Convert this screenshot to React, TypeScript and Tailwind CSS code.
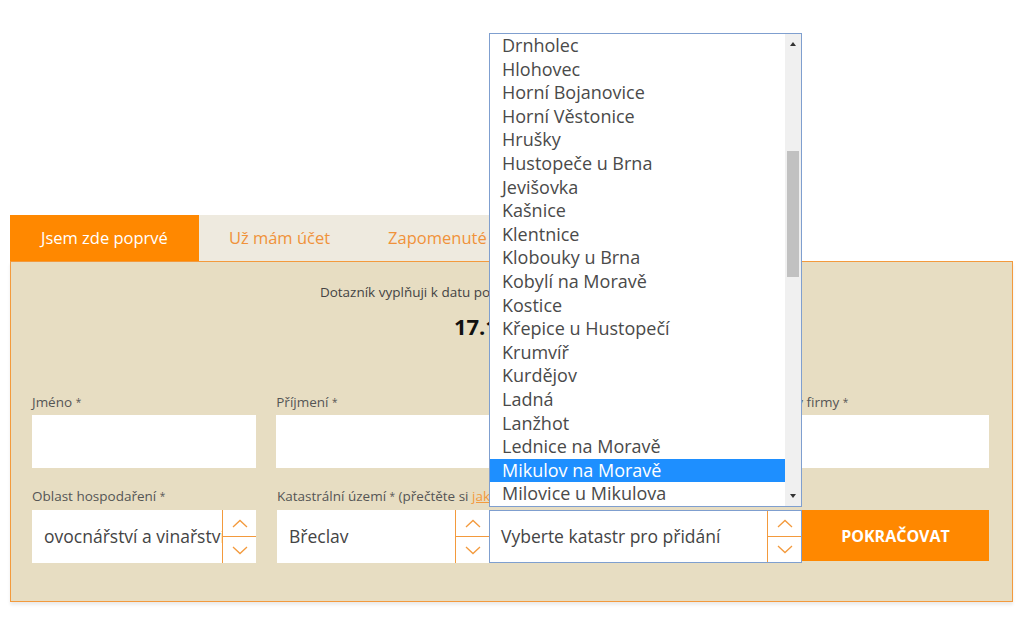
import React from "react";

const katastry = [
  "Drnholec",
  "Hlohovec",
  "Horní Bojanovice",
  "Horní Věstonice",
  "Hrušky",
  "Hustopeče u Brna",
  "Jevišovka",
  "Kašnice",
  "Klentnice",
  "Klobouky u Brna",
  "Kobylí na Moravě",
  "Kostice",
  "Křepice u Hustopečí",
  "Krumvíř",
  "Kurdějov",
  "Ladná",
  "Lanžhot",
  "Lednice na Moravě",
  "Mikulov na Moravě",
  "Milovice u Mikulova",
];

function Chevron({ up }: { up?: boolean }) {
  return (
    <svg width="16" height="9" viewBox="0 0 16 9" fill="none">
      <polyline
        points={up ? "1,8 8,1.5 15,8" : "1,1 8,7.5 15,1"}
        stroke="#f39a3d"
        strokeWidth="1.3"
      />
    </svg>
  );
}

function Spinner() {
  return (
    <div className="flex w-[34px] shrink-0 flex-col border-l border-[#f39a3d]">
      <div className="flex flex-1 items-center justify-center border-b border-[#f39a3d]">
        <Chevron up />
      </div>
      <div className="flex flex-1 items-center justify-center">
        <Chevron />
      </div>
    </div>
  );
}

function Label({ children }: { children: React.ReactNode }) {
  return <div className="h-[18px] text-[13.5px] leading-[18px] text-[#555] whitespace-nowrap">{children}</div>;
}

export default function App() {
  return (
    <div
      className="min-h-[621px] bg-white pt-[215px] pl-[10px]"
      style={{ fontFamily: "'Open Sans', Lato, sans-serif" }}
    >
      <div className="w-[1003px]">
        <div className="flex h-[46px] text-[16.5px]">
          <div className="flex items-center bg-[#ff8800] px-[31px] text-white">Jsem zde poprvé</div>
          <div className="flex items-center bg-[#eeeadf] px-[30px] text-[#f0923a]">Už mám účet</div>
          <div className="flex items-center bg-[#eeeadf] px-[28px] text-[#f0923a]">Zapomenuté heslo</div>
        </div>

        <div className="h-[341px] border border-[#f39a3d] bg-[#e7ddc2] pt-[21px] pl-[21px] pr-[23px] shadow-[0_3px_3px_rgba(0,0,0,0.08)]">
          <div className="text-center text-[13.5px] leading-[18px] text-[#444]">
            Dotazník vyplňuji k datu posledního dne předchozího měsíce
          </div>
          <div className="mt-[11px] text-center text-[22px] font-bold leading-[28px] text-[#111]">
            17.10.2016
          </div>

          <div className="mt-[53px] grid grid-cols-4 gap-x-[20px]">
            {["Jméno", "Příjmení", "E-mail", "Název firmy"].map((l) => (
              <div key={l}>
                <Label>
                  {l} <span className="text-[10px] align-top">*</span>
                </Label>
                <div className="mt-[4px] h-[53px] bg-white" />
              </div>
            ))}
          </div>

          <div className="mt-[19px] flex">
            <div className="w-[224px]">
              <Label>
                Oblast hospodaření <span className="text-[10px] align-top">*</span>
              </Label>
              <div className="mt-[5px] flex h-[53px] bg-white">
                <div className="flex flex-1 items-center overflow-hidden whitespace-nowrap pl-[12px] text-[17.5px] text-[#444]">
                  ovocnářství a vinařství
                </div>
                <Spinner />
              </div>
            </div>

            <div className="ml-[21px] w-[212px]">
              <Label>
                Katastrální území <span className="text-[10px] align-top">*</span> (přečtěte si{" "}
                <span className="text-[#f39a3d] underline">jak</span>
              </Label>
              <div className="mt-[5px] flex h-[53px] bg-white">
                <div className="flex flex-1 items-center pl-[12px] text-[17.5px] text-[#444]">Břeclav</div>
                <Spinner />
              </div>
            </div>

            <div className="relative mt-[23px] w-[313px]">
              <div className="absolute bottom-full left-0 z-10 mb-[3px] flex h-[474px] w-[313px] border border-[#7f9fcf] bg-white">
                <div className="flex-1 overflow-hidden">
                  {katastry.map((k) => (
                    <div
                      key={k}
                      className={`h-[23.6px] pl-[12px] text-[18px] leading-[23.6px] whitespace-nowrap ${
                        k === "Mikulov na Moravě" ? "bg-[#1e8fff] text-white" : "text-[#4a4a4a]"
                      }`}
                    >
                      {k}
                    </div>
                  ))}
                </div>
                <div className="flex w-[16px] flex-col bg-[#f0f0f0]">
                  <div className="flex h-[20px] items-center justify-center">
                    <div className="h-0 w-0 border-x-[3.5px] border-b-[4px] border-x-transparent border-b-[#333]" />
                  </div>
                  <div className="mx-[2px] mt-[97px] h-[126px] bg-[#c1c1c1]" />
                  <div className="flex-1" />
                  <div className="flex h-[20px] items-center justify-center">
                    <div className="h-0 w-0 border-x-[3.5px] border-t-[4px] border-x-transparent border-t-[#333]" />
                  </div>
                </div>
              </div>
              <div className="flex h-[53px] border border-[#7f9fcf] bg-white">
                <div className="flex flex-1 items-center pl-[11px] text-[17.5px] text-[#444]">
                  Vyberte katastr pro přidání
                </div>
                <Spinner />
              </div>
            </div>

            <div className="mt-[23px] flex h-[51px] w-[187px] items-center justify-center bg-[#ff8800] text-[16px] font-bold text-white">
              POKRAČOVAT
            </div>
          </div>
        </div>
      </div>
    </div>
  );
}
